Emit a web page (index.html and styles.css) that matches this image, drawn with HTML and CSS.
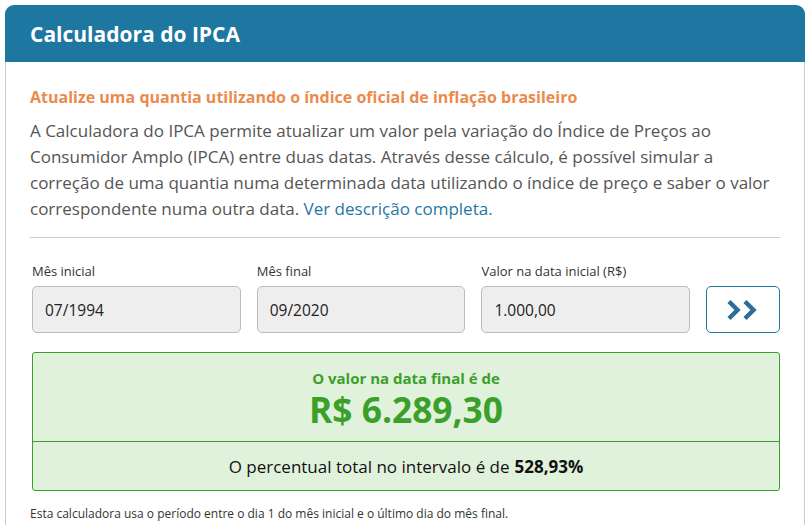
FILE: index.html
```html
<!DOCTYPE html>
<html lang="pt-br">
<head>
  <meta charset="UTF-8">
  <meta name="viewport" content="width=device-width, initial-scale=1.0">
  <title>Calculadora do IPCA</title>
  <link rel="stylesheet" href="styles.css">
</head>
<body>
  <!-- Cartão da calculadora -->
  <div class="calc-card">
    <div class="calc-header">
      <h1>Calculadora do IPCA</h1>
    </div>

    <div class="calc-body">
      <h2 class="calc-subtitle">Atualize uma quantia utilizando o índice oficial de inflação brasileiro</h2>
      <p class="calc-desc">
        A Calculadora do IPCA permite atualizar um valor pela variação do Índice de Preços ao
        Consumidor Amplo (IPCA) entre duas datas. Através desse cálculo, é possível simular a
        correção de uma quantia numa determinada data utilizando o índice de preço e saber o valor
        correspondente numa outra data. <a href="#">Ver descrição completa.</a>
      </p>

      <hr class="divider">

      <!-- Formulário -->
      <div class="calc-form">
        <div class="field">
          <label>Mês inicial</label>
          <input type="text" value="07/1994">
        </div>
        <div class="field">
          <label>Mês final</label>
          <input type="text" value="09/2020">
        </div>
        <div class="field">
          <label>Valor na data inicial (R$)</label>
          <input type="text" value="1.000,00">
        </div>
        <button class="calc-btn" type="button">
          <svg width="38" height="24" viewBox="0 0 38 24">
            <path d="M5 3.5 L13.5 12 L5 20.5" fill="none" stroke="#2d6f96" stroke-width="4.5"/>
            <path d="M21 3.5 L29.5 12 L21 20.5" fill="none" stroke="#2d6f96" stroke-width="4.5"/>
          </svg>
        </button>
      </div>

      <!-- Resultado -->
      <div class="result">
        <div class="result-top">
          <p class="result-label">O valor na data final é de</p>
          <p class="result-value">R$ 6.289,30</p>
        </div>
        <div class="result-bottom">
          O percentual total no intervalo é de <b>528,93%</b>
        </div>
      </div>

      <p class="note">Esta calculadora usa o período entre o dia 1 do mês inicial e o último dia do mês final.</p>
    </div>
  </div>
</body>
</html>
```

FILE: styles.css
```css
/* Geral */
* {
  margin: 0;
  padding: 0;
  box-sizing: border-box;
}

body {
  background: #fff;
  font-family: "Open Sans", Arial, sans-serif;
  color: #555;
}

/* Cartão */
.calc-card {
  width: 800px;
  margin: 5px 0 0 5px;
}

.calc-header {
  background: #1e77a0;
  border-radius: 9px 9px 0 0;
  height: 57px;
  padding: 0 25px;
  display: flex;
  align-items: center;
}

.calc-header h1 {
  color: #fff;
  font-size: 21px;
  font-weight: 700;
}

.calc-body {
  border: 1px solid #ccc;
  border-top: none;
  padding: 24px 24px 0 24px;
  height: 470px;
}

.calc-subtitle {
  color: #ec8a4c;
  font-size: 16px;
  font-weight: 700;
  line-height: 22px;
}

.calc-desc {
  font-size: 17px;
  line-height: 26px;
  margin-top: 10px;
  color: #555;
}

.calc-desc a {
  color: #1f77a5;
  text-decoration: none;
}

.divider {
  border: none;
  border-top: 1px solid #ccc;
  margin: 15px 0 0 0;
}

/* Formulário */
.calc-form {
  display: flex;
  align-items: flex-end;
  gap: 16px;
  margin-top: 24px;
  padding-left: 2px;
}

.field {
  width: 209px;
}

.field label {
  display: block;
  font-size: 13px;
  color: #333;
  line-height: 18px;
  margin-bottom: 6px;
}

.field input {
  width: 100%;
  height: 47px;
  background: #eee;
  border: 1px solid #bbb;
  border-radius: 5px;
  padding: 0 12px;
  font-family: "Open Sans", Arial, sans-serif;
  font-size: 15.5px;
  color: #222;
}

.calc-btn {
  width: 74px;
  height: 47px;
  background: #fff;
  border: 1px solid #1f77a5;
  border-radius: 5px;
  display: flex;
  align-items: center;
  justify-content: center;
}

/* Resultado */
.result {
  margin: 19px 0 0 2px;
  background: #e1f2dc;
  border: 1px solid #3aa02a;
  border-radius: 3px;
  text-align: center;
}

.result-top {
  padding: 14px 0 12px;
  border-bottom: 1px solid #3aa02a;
}

.result-label {
  color: #3aa02a;
  font-size: 15px;
  font-weight: 700;
  line-height: 22px;
}

.result-value {
  color: #3aa02a;
  font-size: 35.3px;
  font-weight: 700;
  line-height: 40px;
}

.result-bottom {
  height: 48px;
  display: flex;
  align-items: center;
  justify-content: center;
  gap: 5px;
  font-size: 17px;
  color: #111;
}

.result-bottom b {
  font-weight: 700;
}

.note {
  font-size: 12px;
  line-height: 18px;
  color: #333;
  margin-top: 14px;
}
```
